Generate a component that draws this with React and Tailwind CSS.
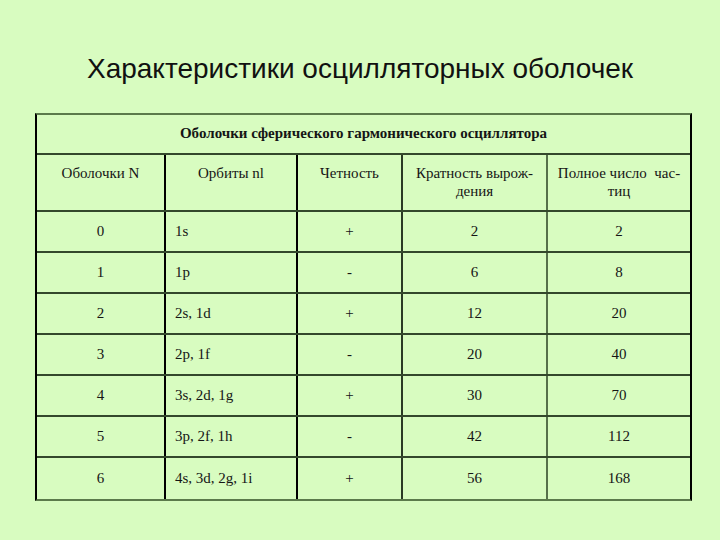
import React from "react";

const rows = [
	["0", "1s", "+", "2", "2"],
	["1", "1p", "-", "6", "8"],
	["2", "2s, 1d", "+", "12", "20"],
	["3", "2p, 1f", "-", "20", "40"],
	["4", "3s, 2d, 1g", "+", "30", "70"],
	["5", "3p, 2f, 1h", "-", "42", "112"],
	["6", "4s, 3d, 2g, 1i", "+", "56", "168"],
];

const Row = ({ cells, last }) => {
	return (
		<div
			className={
				"flex h-[41px] " + (last ? "" : "border-b-2 border-[#34482c]")
			}
		>
			<div className="w-[129px] flex items-center justify-center border-r-2 border-black">
				{cells[0]}
			</div>
			<div className="w-[132px] flex items-center pl-[9px] border-r-2 border-black">
				{cells[1]}
			</div>
			<div className="w-[105px] flex items-center justify-center border-r-2 border-[#2a3a24]">
				{cells[2]}
			</div>
			<div className="w-[145px] flex items-center justify-center border-r-2 border-[#56704a]">
				{cells[3]}
			</div>
			<div className="flex-1 flex items-center justify-center">{cells[4]}</div>
		</div>
	);
};

const App = () => {
	return (
		<div className="w-[720px] h-[540px] bg-[#d8fcc0] overflow-hidden">
			<h1 className="pt-[52px] text-center text-[28px] leading-[34px] text-[#111] font-['Liberation_Sans',Arial,sans-serif]">
				Характеристики осцилляторных оболочек
			</h1>
			<div className="mt-[27px] ml-[35px] w-[657px] border-2 border-l-black border-r-black border-t-[#5b7a4b] border-b-[#5b7a4b] text-[15px] text-[#151515] font-['Liberation_Serif','Times_New_Roman',serif]">
				<div className="h-[40px] flex items-center justify-center border-b-2 border-[#34482c] font-bold text-[15px] pb-[2px]">
					Оболочки сферического гармонического осциллятора
				</div>
				<div className="flex h-[57px] border-b-2 border-[#34482c] leading-[18px]">
					<div className="w-[129px] text-center border-r-2 border-black pt-[9px]">
						Оболочки N
					</div>
					<div className="w-[132px] text-center border-r-2 border-black pt-[9px]">
						Орбиты nl
					</div>
					<div className="w-[105px] text-center border-r-2 border-[#2a3a24] pt-[9px]">
						Четность
					</div>
					<div className="w-[145px] text-center border-r-2 border-[#56704a] pt-[9px] px-2">
						Кратность вырож-
						<br />
						дения
					</div>
					<div className="flex-1 text-center pt-[9px] px-2">
						Полное число&nbsp; час-
						<br />
						тиц
					</div>
				</div>
				{rows.map((r, i) => (
					<Row key={i} cells={r} last={i === rows.length - 1} />
				))}
			</div>
		</div>
	);
};

export default App;
